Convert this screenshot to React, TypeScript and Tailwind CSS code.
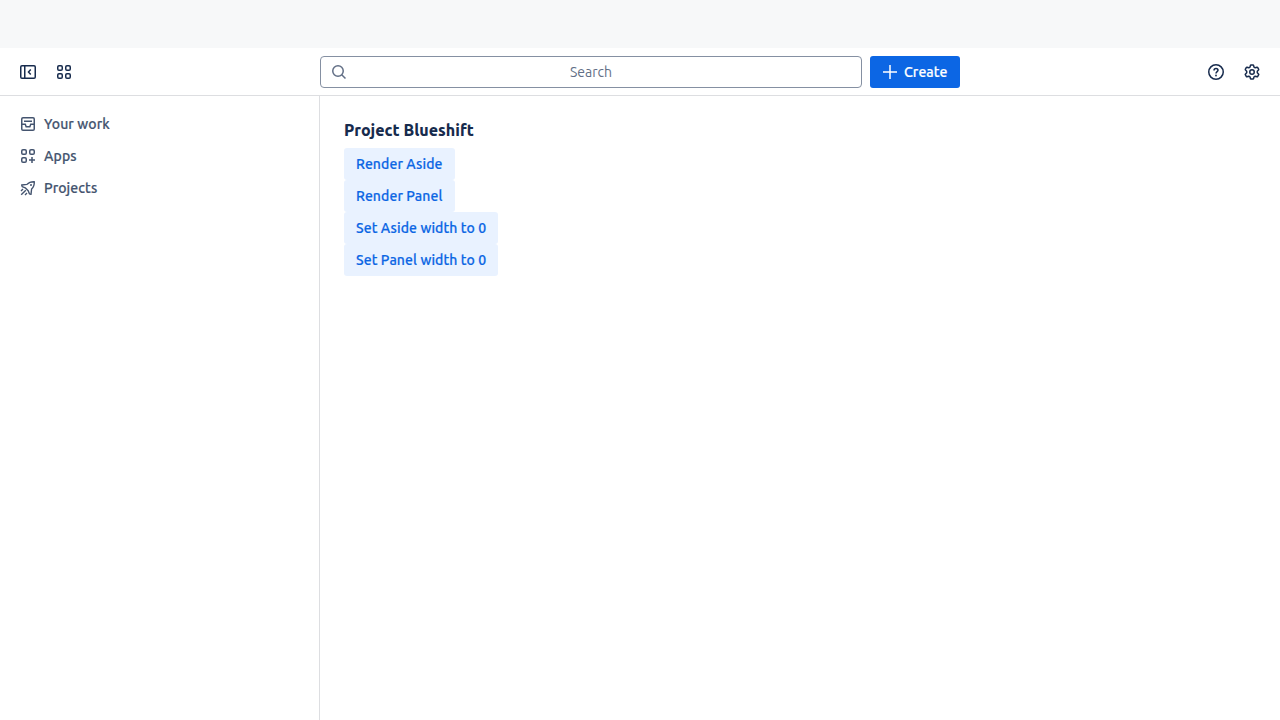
import type { ReactNode } from 'react';

function Icon({ children }: { children: ReactNode }) {
  return (
    <svg
      className="size-4 shrink-0"
      viewBox="0 0 16 16"
      fill="none"
      stroke="currentColor"
      strokeWidth={1.5}
      aria-hidden="true"
    >
      {children}
    </svg>
  );
}

function SidebarCollapseIcon() {
  return (
    <Icon>
      <rect x="0.75" y="1.75" width="14.5" height="12.5" rx="1.25" />
      <path d="M4.75 2v12M10.75 5.5L8.5 8l2.25 2.5" />
    </Icon>
  );
}

function AppSwitcherIcon() {
  return (
    <Icon>
      <rect x="1.75" y="1.75" width="4.5" height="4.5" rx="1.25" />
      <rect x="9.75" y="1.75" width="4.5" height="4.5" rx="1.25" />
      <rect x="1.75" y="9.75" width="4.5" height="4.5" rx="1.25" />
      <rect x="9.75" y="9.75" width="4.5" height="4.5" rx="1.25" />
    </Icon>
  );
}

function SearchIcon() {
  return (
    <Icon>
      <circle cx="7" cy="7" r="5.25" />
      <path d="M10.75 10.75L14.5 14.5" />
    </Icon>
  );
}

function AddIcon() {
  return (
    <Icon>
      <path d="M8 1v14M1 8h14" />
    </Icon>
  );
}

function HelpIcon() {
  return (
    <Icon>
      <circle cx="8" cy="8" r="7.25" />
      <path d="M6 6.5C6 5.2 6.8 4.5 8 4.5s2 .75 2 1.75C10 7.7 8 7.6 8 9.5" />
      <circle cx="8" cy="11.5" r="0.9" fill="currentColor" stroke="none" />
    </Icon>
  );
}

function SettingsIcon() {
  return (
    <Icon>
      <path
        strokeLinejoin="round"
        d="M6.9 .9h2.2q.3 0 .4.3l.5 1.9 1.2.7 1.9-.6q.3-.1.5.2l1.1 1.9q.2.3 0 .5L13.3 7.2v1.6l1.4 1.4q.2.2 0 .5l-1.1 1.9q-.2.3-.5.2l-1.9-.6-1.2.7-.5 1.9q-.1.3-.4.3H6.9q-.3 0-.4-.3l-.5-1.9-1.2-.7-1.9.6q-.3.1-.5-.2l-1.1-1.9q-.2-.3 0-.5l1.4-1.4V7.2L1.3 5.8q-.2-.2 0-.5l1.1-1.9q.2-.3.5-.2l1.9.6L6 3.1l.5-1.9q.1-.3.4-.3z"
      />
      <circle cx="8" cy="8" r="2.25" />
    </Icon>
  );
}

function InboxIcon() {
  return (
    <Icon>
      <rect x="1.75" y="1.75" width="12.5" height="12.5" rx="1.25" />
      <path d="M4 5.25h8M2 8.25h3.25l.9 2.5h3.7l.9-2.5H14" />
    </Icon>
  );
}

function AppsIcon() {
  return (
    <Icon>
      <rect x="1.75" y="1.75" width="4.5" height="4.5" rx="1.25" />
      <rect x="9.75" y="1.75" width="4.5" height="4.5" rx="1.25" />
      <rect x="1.75" y="9.75" width="4.5" height="4.5" rx="1.25" />
      <path d="M12 9v6M9 12h6" />
    </Icon>
  );
}

function ProjectsIcon() {
  return (
    <Icon>
      <path
        strokeWidth={1.4}
        strokeLinejoin="round"
        d="M7 4.4C8.8 2.4 11 1.6 14.3 1.7c.1 3.3-.7 5.5-2.7 7.3l-.6 5.3-1.6-.5-1.2-3-3-3-3-1.2-.5-1.6zM5.8 10.2L1.2 14.8M3 9L1 11M7 13l-2 2"
      />
      <circle cx="11" cy="5" r="1" fill="currentColor" stroke="none" />
    </Icon>
  );
}

function IconButton({ label, children }: { label: string; children: ReactNode }) {
  return (
    <button aria-label={label} className="flex size-8 items-center justify-center rounded-[3px]">
      {children}
    </button>
  );
}

const navItems = [
  { label: 'Your work', icon: <InboxIcon /> },
  { label: 'Apps', icon: <AppsIcon /> },
  { label: 'Projects', icon: <ProjectsIcon /> },
];

const actions = [
  { label: 'Render Aside', width: 'w-[111px]' },
  { label: 'Render Panel', width: 'w-[111px]' },
  { label: 'Set Aside width to 0', width: 'w-[154px]' },
  { label: 'Set Panel width to 0', width: 'w-[154px]' },
];

export default function App() {
  return (
    <div className="flex h-screen flex-col bg-white font-[Ubuntu,'Noto_Sans',sans-serif] text-sm leading-5 text-[#172b4d]">
      <div className="h-12 shrink-0 bg-[#f7f8f9]" />
      <header className="flex h-12 shrink-0 items-center justify-between border-b border-[#dddee1] px-3">
        <div className="flex flex-1 gap-1">
          <IconButton label="Collapse sidebar"><SidebarCollapseIcon /></IconButton>
          <IconButton label="Switch apps"><AppSwitcherIcon /></IconButton>
        </div>
        <div className="flex w-[640px] gap-2">
          <button className="flex h-8 flex-1 items-center rounded-[4px] border border-[#8590a2] pr-2.5 pl-2.5 text-[#626f86]">
            <SearchIcon />
            <span className="flex-1 pr-4 text-center">Search</span>
          </button>
          <button className="flex h-8 w-[90px] items-center gap-1.5 rounded-[3px] bg-[#0c66e4] pl-3 font-medium tracking-[0.1px] text-white [-webkit-text-stroke:0.2px]">
            <AddIcon />
            Create
          </button>
        </div>
        <div className="flex flex-1 justify-end gap-1">
          <IconButton label="Help"><HelpIcon /></IconButton>
          <IconButton label="Settings"><SettingsIcon /></IconButton>
        </div>
      </header>
      <div className="flex min-h-0 flex-1">
        <nav className="w-80 shrink-0 border-r border-[#dddee1] p-3 font-medium tracking-[0.1px] text-[#44546f] [-webkit-text-stroke:0.2px]">
          {navItems.map((item) => (
            <a key={item.label} className="flex h-8 items-center gap-2 px-2">
              {item.icon}
              <span>{item.label}</span>
            </a>
          ))}
        </nav>
        <main className="flex-1 px-6 pt-6">
          <h1 className="mb-2 text-base leading-5 font-extrabold">Project Blueshift</h1>
          <div className="flex flex-col items-start">
            {actions.map((action) => (
              <button
                key={action.label}
                className={`${action.width} h-8 rounded-[3px] bg-[#e9f2ff] pl-3 text-left font-medium tracking-[0.1px] whitespace-nowrap text-[#0c66e4] [-webkit-text-stroke:0.2px]`}
              >
                {action.label}
              </button>
            ))}
          </div>
        </main>
      </div>
    </div>
  );
}
